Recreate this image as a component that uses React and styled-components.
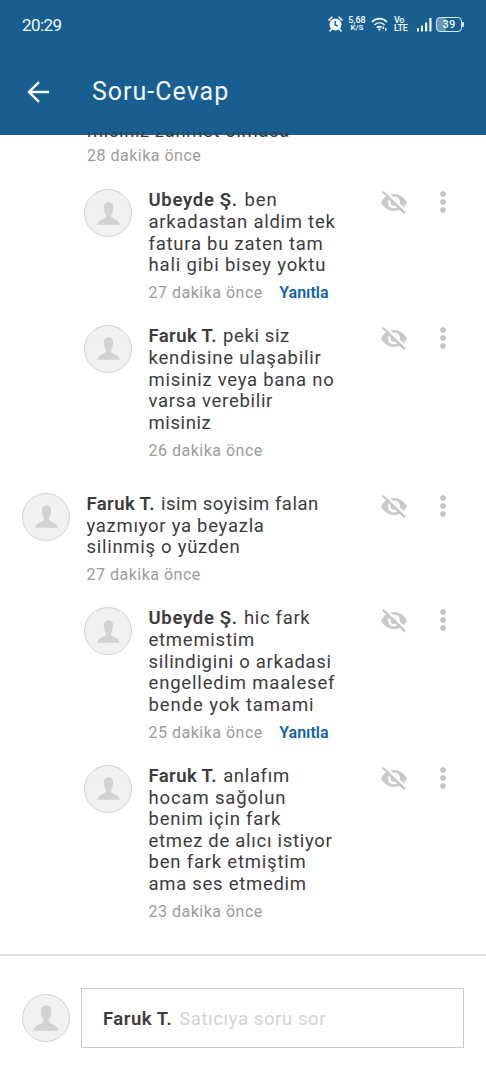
import React from 'react';
import styled, { createGlobalStyle } from 'styled-components';

const GlobalStyle = createGlobalStyle`
  * { box-sizing: border-box; }
  body { margin: 0; background: #fff; font-family: Roboto, "Liberation Sans", sans-serif; }
`;

const Screen = styled.div`
  display: flex;
  flex-direction: column;
  width: 486px;
  height: 1080px;
  overflow: hidden;
  background: #fff;
  color: #3c3c3e;
`;

const Header = styled.header`
  flex: none;
  height: 135px;
  background: #195e91;
  color: #f1fafc;
`;

const StatusBar = styled.div`
  display: flex;
  justify-content: space-between;
  align-items: center;
  height: 48px;
  padding: 0 22px 0 22px;
`;

const Clock = styled.span`
  font-size: 17px;
  letter-spacing: -0.55px;
  padding-top: 2px;
`;

const StatusIcons = styled.div`
  display: flex;
  align-items: center;
`;

const Stack = styled.span`
  display: flex;
  flex-direction: column;
  align-items: ${(p) => p.$align || 'center'};
  width: ${(p) => p.$width}px;
  margin-left: ${(p) => p.$gap}px;
  font-weight: 600;
  font-size: 9px;
  line-height: 8px;
  white-space: nowrap;
  letter-spacing: ${(p) => p.$track || 0}px;
`;

const StackSmall = styled.span`
  font-size: 8px;
`;

const StatusGlyph = styled.svg`
  display: block;
  margin-left: ${(p) => p.$gap || 0}px;
`;

const Battery = styled.span`
  display: flex;
  align-items: center;
  margin-left: 4px;
  &::after {
    content: '';
    width: 2px;
    height: 5px;
    background: #d5e6ef;
    border-radius: 0 1px 1px 0;
  }
`;

const BatteryBody = styled.span`
  width: 26px;
  height: 15px;
  border: 1px solid #d5e6ef;
  border-radius: 4px;
  background: linear-gradient(90deg, #6796b8 0 9px, transparent 9px);
  font-size: 11px;
  font-weight: 500;
  line-height: 13.5px;
  letter-spacing: 0.3px;
  text-align: center;
`;

const TitleBar = styled.div`
  display: flex;
  align-items: center;
  height: 87px;
  padding-left: 27px;
`;

const BackArrow = styled.svg`
  display: block;
  flex: none;
`;

const Title = styled.h1`
  margin: 0 0 0 43px;
  font-size: 25px;
  font-weight: 400;
  letter-spacing: 1px;
`;

const Feed = styled.main`
  flex: none;
  height: 822px;
  margin-top: -3px;
  overflow: hidden;
`;

const Preceding = styled.div`
  display: flow-root;
  height: 57px;
  padding-left: 87px;
`;

const PrecedingText = styled.p`
  margin: -11px 0 -3px;
  font-size: 18.5px;
  line-height: 21.6px;
  letter-spacing: 0.6px;
`;

const Comment = styled.article`
  display: flex;
  align-items: flex-start;
  padding-left: ${(p) => (p.$reply ? 84 : 22)}px;
  margin-top: ${(p) => (p.$reply ? 0 : 10.2)}px;
`;

const AvatarRing = styled.span`
  flex: none;
  display: flex;
  align-items: center;
  justify-content: center;
  width: 48px;
  height: 48px;
  border: 1px solid #d3d3d3;
  border-radius: 50%;
  background: #f1f1f1;
`;

const Body = styled.div`
  flex: 1;
  margin-left: 16.5px;
  padding: 1.4px 0 22.6px;
`;

const Line = styled.div`
  font-size: 18.5px;
  line-height: 21.6px;
  white-space: nowrap;
  letter-spacing: ${(p) => p.$track}px;
`;

const Name = styled.strong`
  font-weight: 600;
  letter-spacing: ${(p) => p.$track}px;
  margin-right: 1px;
`;

const Meta = styled.div`
  display: flex;
  height: 19px;
  margin-top: 6.6px;
  font-size: 16px;
  line-height: 19px;
  letter-spacing: 0.5px;
  color: #9b9b9b;
`;

const ReplyLink = styled.a`
  margin-left: 16.5px;
  color: #1361a9;
  font-weight: 600;
  letter-spacing: 0;
`;

const Actions = styled.div`
  flex: none;
  display: flex;
  align-items: center;
  justify-content: space-between;
  width: 66px;
  margin: 0 40px 0 0;
`;

const Composer = styled.footer`
  flex: none;
  display: flex;
  align-items: center;
  height: 126px;
  padding: 0 22px;
  border-top: 2px solid #e0e0e0;
`;

const Field = styled.div`
  flex: 1;
  display: flex;
  align-items: center;
  height: 60px;
  margin-left: 11px;
  padding: 2px 0 0 21px;
  border: 1px solid #cdcdcd;
  font-size: 18.5px;
`;

const Placeholder = styled.span`
  margin-left: 6px;
  color: #d3d3d3;
  letter-spacing: 0.6px;
`;

const Avatar = ({ size = 23 }) => (
  <AvatarRing>
    <svg width={size} height={size} viewBox="0 0 24 24" fill="#d2d2d2">
      <path d="M12 .3C8.800 .3 7.100 2.500 7.200 5.800C7.300 9.300 8 11.600 9.200 13.200C9.700 15.300 9.200 16.200 7.200 17.200C3.800 18.700 1.200 19.900 .2 23.700H23.800C22.800 19.900 20.200 18.700 16.800 17.200C14.800 16.200 14.300 15.300 14.800 13.200C16 11.600 16.700 9.300 16.800 5.800C16.900 2.500 15.200 .3 12 .3Z" />
    </svg>
  </AvatarRing>
);

const HiddenEye = () => (
  <svg width="28" height="26" viewBox="0 0 28 26">
    <path d="M1 13.500C4 7.700 9 4.900 14 4.900S24 7.700 27 13.500C24 19.200 19 22 14 22S4 19.200 1 13.500Z" fill="#cacaca" />
    <circle cx="14" cy="13.400" r="6" fill="#fff" />
    <circle cx="14" cy="13.400" r="3.400" fill="#cacaca" />
    <path d="M4.300 1L26.500 22.600" stroke="#fff" strokeWidth="2.200" />
    <path d="M2.700 2.700L25 24.400" stroke="#c6c6c6" strokeWidth="2.300" />
  </svg>
);

const MoreDots = () => (
  <svg width="6" height="24" viewBox="0 0 6 24" fill="#c4c4c4">
    <circle cx="3" cy="4" r="2.800" />
    <circle cx="3" cy="12" r="2.800" />
    <circle cx="3" cy="20" r="2.800" />
  </svg>
);

const COMMENTS = [
  {
    name: 'Ubeyde Ş.', nameTrack: 0.7, time: '27 dakika önce', reply: true, canReply: true,
    lines: [['ben', 1], ['arkadastan aldim tek', 0.74], ['fatura bu zaten tam', 0.75], ['hali gibi bisey yoktu', 0.82]],
  },
  {
    name: 'Faruk T.', nameTrack: 0.4, time: '26 dakika önce', reply: true,
    lines: [['peki siz', 0.6], ['kendisine ulaşabilir', 0.79], ['misiniz veya bana no', 0.74], ['varsa verebilir', 0.7], ['misiniz', 0.6]],
  },
  {
    name: 'Faruk T.', nameTrack: 0.4, time: '27 dakika önce',
    lines: [['isim soyisim falan', 0.5], ['yazmıyor ya beyazla', 0.72], ['silinmiş o yüzden', 0.72]],
  },
  {
    name: 'Ubeyde Ş.', nameTrack: 0.7, time: '25 dakika önce', reply: true, canReply: true,
    lines: [['hic fark', 0.65], ['etmemistim', 0.75], ['silindigini o arkadasi', 0.7], ['engelledim maalesef', 0.82], ['bende yok tamami', 0.9]],
  },
  {
    name: 'Faruk T.', nameTrack: 0.4, time: '23 dakika önce', reply: true,
    lines: [['anlafım', 0.66], ['hocam sağolun', 0.85], ['benim için fark', 0.76], ['etmez de alıcı istiyor', 0.7], ['ben fark etmiştim', 0.79], ['ama ses etmedim', 0.72]],
  },
];

const CommentItem = ({ name, nameTrack, time, reply, canReply, lines }) => (
  <Comment $reply={reply}>
    <Avatar />
    <Body>
      {lines.map(([text, track], i) => (
        <Line key={text} $track={track}>
          {i === 0 && <><Name $track={nameTrack}>{name}</Name>{' '}</>}
          {text}
        </Line>
      ))}
      <Meta>
        <span>{time}</span>
        {canReply && <ReplyLink>Yanıtla</ReplyLink>}
      </Meta>
    </Body>
    <Actions>
      <HiddenEye />
      <MoreDots />
    </Actions>
  </Comment>
);

export default function App() {
  return (
    <Screen>
      <GlobalStyle />
      <Header>
        <StatusBar>
          <Clock>20:29</Clock>
          <StatusIcons>
            <StatusGlyph width="15" height="16" viewBox="0 0 15 16">
              <path d="M1 4L4 1.200M14 4L11 1.200M3.500 13L2 15M11.500 13L13 15" stroke="#f1fafc" strokeWidth="1.600" strokeLinecap="round" />
              <circle cx="7.500" cy="8.500" r="6" fill="#f1fafc" />
              <path d="M7.200 5V9L9.800 10" fill="none" stroke="#195e91" strokeWidth="1.400" />
            </StatusGlyph>
            <Stack $width={18} $gap={5.5}>
              <span>5,68</span>
              <StackSmall>K/S</StackSmall>
            </Stack>
            <StatusGlyph $gap={5} width="17" height="15" viewBox="0 0 17 15">
              <path d="M1 5C5.200 .6 11.800 .6 16 5M3.400 8C6.400 5 10.600 5 13.600 8M5.700 10.700C7.500 9.200 9 9.200 10.600 10.200" fill="none" stroke="#f1fafc" strokeWidth="1.700" />
              <path d="M6.800 12L8.400 11.200L9.800 12L8.400 14Z" fill="#f1fafc" />
              <path d="M12.200 9.500V12M14.700 11V14" stroke="#f1fafc" strokeWidth="1.400" />
            </StatusGlyph>
            <Stack $width={15} $gap={6} $align="flex-start" $track={-0.3}>
              <span>Vo</span>
              <span>LTE</span>
            </Stack>
            <StatusGlyph $gap={8} width="15" height="15" viewBox="0 0 15 15" fill="#f1fafc">
              <rect x="0" y="11" width="2" height="3.500" rx=".5" />
              <rect x="4" y="8.500" width="2" height="6" rx=".5" />
              <rect x="8" y="5.500" width="2.200" height="9" rx=".5" />
              <rect x="12.300" y="1" width="2.200" height="13.500" rx=".5" />
            </StatusGlyph>
            <Battery><BatteryBody>39</BatteryBody></Battery>
          </StatusIcons>
        </StatusBar>
        <TitleBar>
          <BackArrow width="22" height="22" viewBox="0 0 22 22" fill="none" stroke="#fff" strokeWidth="2.400">
            <path d="M22 11H2M12 1.200L2 11L12 20.800" />
          </BackArrow>
          <Title>Soru-Cevap</Title>
        </TitleBar>
      </Header>
      <Feed>
        <Preceding>
          <PrecedingText>misiniz zahmet olmasa</PrecedingText>
          <Meta><span>28 dakika önce</span></Meta>
        </Preceding>
        {COMMENTS.map((c, i) => <CommentItem key={i} {...c} />)}
      </Feed>
      <Composer>
        <Avatar size={26} />
        <Field>
          <Name $track={0.5}>Faruk T.</Name>
          <Placeholder>Satıcıya soru sor</Placeholder>
        </Field>
      </Composer>
    </Screen>
  );
}
